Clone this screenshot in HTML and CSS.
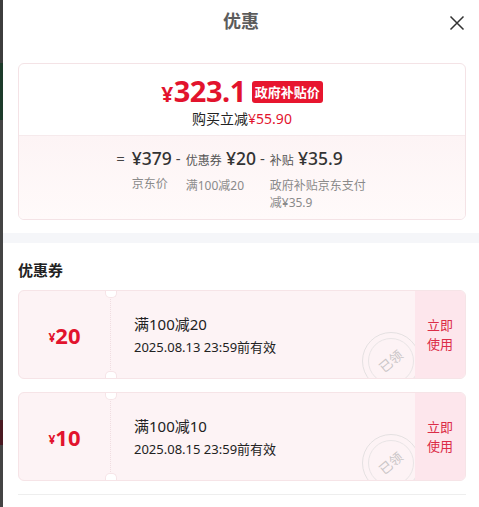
FILE: index.html
```html
<!DOCTYPE html>
<html>
<head>
  <meta charset="utf-8">
  <title>优惠</title>
  <link rel="stylesheet" href="styles.css">
</head>
<body>
  <div class="frame">
    <div class="edge"></div>

    <div class="sheet">
      <div class="header">
        <h1>优惠</h1>
        <span class="close">
          <svg width="16" height="16" viewBox="0 0 16 16"><path d="M1.5 1.5 L14.5 14.5 M14.5 1.5 L1.5 14.5" stroke="#333" stroke-width="1.5" fill="none"/></svg>
        </span>
      </div>

      <!-- price summary -->
      <div class="summary">
        <div class="summary-top">
          <div class="price-line">
            <span class="price"><small>¥</small>323.1</span>
            <span class="badge">政府补贴价</span>
          </div>
          <div class="saved">购买立减<em>¥55.90</em></div>
        </div>
        <div class="summary-bottom">
          <div class="calc">
            <span class="op">=</span>
            <div class="item">
              <div class="main"><b>¥379</b></div>
              <div class="label">京东价</div>
            </div>
          </div>
          <div class="calc">
            <span class="op">-</span>
            <div class="item">
              <div class="main"><i>优惠券</i> <b>¥20</b></div>
              <div class="label">满100减20</div>
            </div>
          </div>
          <div class="calc">
            <span class="op">-</span>
            <div class="item">
              <div class="main"><i>补贴</i> <b>¥35.9</b></div>
              <div class="label wrap">政府补贴京东支付减¥35.9</div>
            </div>
          </div>
        </div>
      </div>

      <div class="band"></div>

      <h2>优惠券</h2>

      <div class="coupons">
        <div class="coupon">
          <div class="amount"><small>¥</small>20</div>
          <div class="info">
            <div class="rule">满100减20</div>
            <div class="date">2025.08.13 23:59前有效</div>
            <div class="stamp"><span>已领</span></div>
          </div>
          <div class="use">立即<br>使用</div>
        </div>

        <div class="coupon">
          <div class="amount"><small>¥</small>10</div>
          <div class="info">
            <div class="rule">满100减10</div>
            <div class="date">2025.08.15 23:59前有效</div>
            <div class="stamp"><span>已领</span></div>
          </div>
          <div class="use">立即<br>使用</div>
        </div>
      </div>

      <div class="rule-line"></div>
    </div>
  </div>
</body>
</html>
```

FILE: styles.css
```css
* {
  box-sizing: border-box;
}

body {
  margin: 0;
  font-family: "Noto Sans", "Noto Sans CJK SC", sans-serif;
  color: #222;
  background: #fff;
}

.frame {
  display: flex;
  height: 507px;
  overflow: hidden;
}

.edge {
  width: 3px;
  background: linear-gradient(#3d3d3d 0, #3d3d3d 63px, #1d3b2a 63px, #1d3b2a 120px, #444 120px, #444 420px, #4a1a22 420px, #4a1a22 445px, #444 445px);
}

.sheet {
  flex: 1;
  background: #fff;
}

.header {
  position: relative;
  height: 44px;
  text-align: center;
}

.header h1 {
  margin: 0;
  font-size: 18px;
  line-height: 42px;
  font-weight: bold;
  color: #5c5c5c;
}

.close {
  position: absolute;
  right: 14px;
  top: 14px;
  width: 16px;
  height: 16px;
}

.summary {
  margin: 19px 13px 0 15px;
  border: 1px solid #f4e3e6;
  border-radius: 6px;
  overflow: hidden;
}

.summary-top {
  padding: 11px 0 6px;
  text-align: center;
}

.price-line {
  display: flex;
  justify-content: center;
  align-items: center;
  gap: 6px;
  height: 34px;
}

.price {
  color: #e2132d;
  font-size: 29px;
  line-height: 34px;
  font-weight: bold;
  letter-spacing: -0.5px;
}

.price small {
  font-size: 21px;
  margin-right: 1px;
}

.badge {
  background: #e7162f;
  color: #fff;
  font-size: 13px;
  font-weight: bold;
  line-height: 22px;
  padding: 0 3px;
  border-radius: 3px;
}

.saved {
  font-size: 14px;
  line-height: 20px;
  color: #222;
}

.saved em {
  font-style: normal;
  color: #e2132d;
}

.summary-bottom {
  display: flex;
  justify-content: center;
  gap: 4px;
  border-top: 1px solid #f6eaec;
  background: linear-gradient(#fdf4f5, #fffafa);
  padding: 10px 0 10px 0;
  height: 84px;
}

.calc {
  display: flex;
  align-items: flex-start;
}

.op {
  font-size: 15px;
  line-height: 24px;
  color: #444;
  margin-right: 5px;
}

.calc:first-child .op {
  margin-right: 7px;
}

.main {
  line-height: 24px;
  white-space: nowrap;
}

.main i {
  font-style: normal;
  font-size: 12px;
  color: #555;
}

.main b {
  font-weight: 500;
  font-size: 17.5px;
  color: #333;
}

.label {
  margin-top: 4px;
  font-size: 12px;
  line-height: 17px;
  color: #8a8a8a;
}

.label.wrap {
  width: 98px;
}

.band {
  height: 10px;
  margin-top: 13px;
  background: #f5f6f9;
}

h2 {
  margin: 0;
  padding: 15px 15px 0;
  font-size: 15px;
  line-height: 24px;
  font-weight: bold;
  color: #222;
}

.coupons {
  display: flex;
  flex-direction: column;
  gap: 13px;
  margin: 8px 13px 0 15px;
}

.coupon {
  display: flex;
  height: 89px;
  border: 1px solid #f6e4e7;
  border-radius: 6px;
  background: #fdf3f5;
  position: relative;
  overflow: hidden;
}

.amount {
  width: 92px;
  display: flex;
  align-items: center;
  justify-content: center;
  color: #e2132d;
  font-size: 22px;
  font-weight: bold;
  border-right: 1px dotted #f0dde1;
}

.amount small {
  font-size: 12px;
  margin-top: 5px;
}

.coupon::before,
.coupon::after {
  content: "";
  position: absolute;
  left: 86px;
  width: 10px;
  height: 6px;
  background: #fff;
  border: 1px solid #f6e4e7;
}

.coupon::before {
  top: -1px;
  border-top-color: #fff;
  border-radius: 0 0 5px 5px;
}

.coupon::after {
  bottom: -1px;
  border-bottom-color: #fff;
  border-radius: 5px 5px 0 0;
}

.info {
  flex: 1;
  position: relative;
  overflow: hidden;
  padding: 22px 0 0 23px;
}

.rule {
  font-size: 15px;
  line-height: 22px;
  color: #222;
}

.date {
  margin-top: 2px;
  font-size: 13px;
  line-height: 20px;
  color: #222;
}

.stamp {
  position: absolute;
  right: -5px;
  top: 41px;
  width: 58px;
  height: 58px;
  border: 1.5px solid #e4e0e1;
  border-radius: 50%;
  display: flex;
  align-items: center;
  justify-content: center;
}

.stamp::before {
  content: "";
  position: absolute;
  inset: 5px;
  border: 1px solid #e8e4e5;
  border-radius: 50%;
}

.stamp span {
  display: inline-block;
  font-size: 13px;
  line-height: 15px;
  color: #c9c5c6;
  transform: rotate(-40deg);
}

.use {
  width: 50px;
  display: flex;
  align-items: center;
  justify-content: center;
  text-align: center;
  background: #fde6ec;
  color: #db2c47;
  font-size: 13px;
  line-height: 19px;
}

.rule-line {
  margin: 13px 13px 0 15px;
  border-top: 1px solid #eeeeee;
}
```
